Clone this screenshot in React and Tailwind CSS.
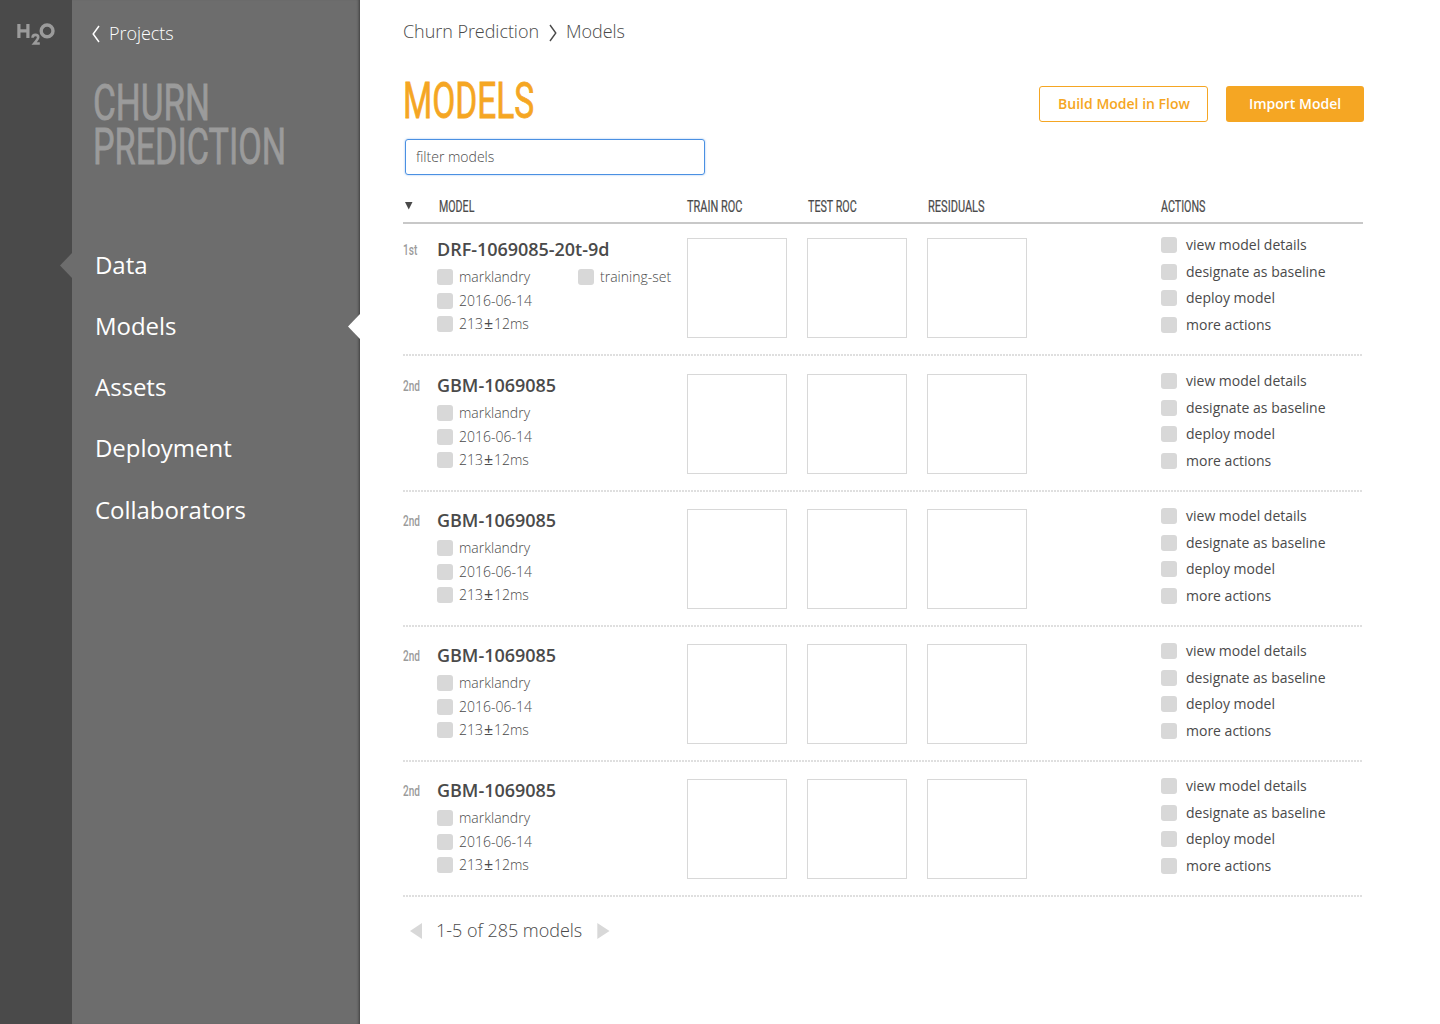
import React from "react";

const NAV = ["Data", "Models", "Assets", "Deployment", "Collaborators"];

const MODELS = [
  { rank: "1st", name: "DRF-1069085-20t-9d", set: "training-set", pad: "pt-[14px]" },
  { rank: "2nd", name: "GBM-1069085", pad: "pt-[18px]" },
  { rank: "2nd", name: "GBM-1069085", pad: "pt-[17px]" },
  { rank: "2nd", name: "GBM-1069085", pad: "pt-[17px]" },
  { rank: "2nd", name: "GBM-1069085", pad: "pt-[17px]" },
];

const ACTIONS = ["view model details", "designate as baseline", "deploy model", "more actions"];

function Narrow({ className = "", children }) {
  return (
    <span className={`block w-max origin-left whitespace-nowrap font-['Roboto',sans-serif] ${className}`}>
      {children}
    </span>
  );
}

function Square() {
  return <span className="size-4 shrink-0 rounded-[3px] bg-[#d8d8d8]" />;
}

function Meta({ children }) {
  return (
    <div className="flex h-4 items-center gap-1.5 text-sm leading-4 font-light whitespace-nowrap text-[#4a4a4a]">
      <Square />
      <span className="flex">{children}</span>
    </div>
  );
}

function Row({ model }) {
  return (
    <div>
      <div className={`flex pb-4 ${model.pad}`}>
        <div className="w-[34px] pt-1">
          <Narrow className="scale-x-[0.72] text-[14px] leading-4 font-medium text-[#9b9b9b]">{model.rank}</Narrow>
        </div>
        <div className="w-[250px]">
          <div className="h-[31px] text-lg leading-[23px] font-semibold tracking-[-0.03px] text-[#4a4a4a]">
            {model.name}
          </div>
          <div className="flex">
            <div className="flex w-[141px] flex-col">
              <Meta>marklandry</Meta>
              <div className="h-2" />
              <Meta>2016-06-14</Meta>
              <div className="h-[7px]" />
              <Meta>
                <span>213</span>
                <span className="-mt-px w-[11px] text-center text-[16px] leading-4 font-normal">±</span>
                <span>12ms</span>
              </Meta>
            </div>
            {model.set && <Meta>{model.set}</Meta>}
          </div>
        </div>
        <div className="flex w-[474px] gap-5">
          <div className="size-[100px] border border-[#d8d8d8]" />
          <div className="size-[100px] border border-[#d8d8d8]" />
          <div className="size-[100px] border border-[#d8d8d8]" />
        </div>
        <div className="-mt-px flex h-24 flex-col justify-between">
          {ACTIONS.map((a) => (
            <div key={a} className="flex h-4 items-center gap-[9px] text-sm leading-4 whitespace-nowrap text-[#4a4a4a]">
              <Square />
              <span>{a}</span>
            </div>
          ))}
        </div>
      </div>
      <div className="h-0.5 bg-[repeating-linear-gradient(90deg,#dfdfdf_0_2px,#ffffff_2px_3px)]" />
    </div>
  );
}

export default function App() {
  return (
    <div className="flex h-[1024px] w-[1440px] overflow-hidden bg-white font-['Open_Sans',sans-serif] text-[#4a4a4a]">
      <aside className="w-[72px] shrink-0 bg-[#4a4a4a] pt-[22px] pl-4">
        <svg width="40" height="24" viewBox="0 0 40 24" fill="none" stroke="#9b9b9b">
          <path d="M2.900 2v14M11.900 2v14M2.900 8.900h9" strokeWidth="3.200" />
          <circle cx="31.100" cy="8.900" r="5.900" strokeWidth="3.400" />
          <path d="M16.500 15.800c.1-2 1.400-2.900 2.900-2.900 1.700 0 2.800 1 2.800 2.400 0 1.500-1.200 2.700-4 6.200h5.600" strokeWidth="2.600" />
        </svg>
      </aside>

      <nav className="relative w-[288px] shrink-0 bg-[#6d6d6d] shadow-[inset_-3px_0_3px_-2px_rgba(0,0,0,0.45)]">
        <svg className="absolute top-[253px] -left-3" width="12" height="25" viewBox="0 0 12 25">
          <path d="M12 0v25L0 12.500z" fill="#6d6d6d" />
        </svg>
        <svg className="absolute top-[314px] right-0" width="12" height="25" viewBox="0 0 12 25">
          <path d="M12 0v25L0 12.500z" fill="#fff" />
        </svg>
        <div className="flex items-center gap-[9px] pt-[21px] pl-5 text-lg leading-6 font-light tracking-[-0.05px] text-white">
          <svg className="mt-px" width="8" height="18" viewBox="0 0 8 18" fill="none" stroke="#fff" strokeWidth="1.500">
            <path d="M7 1 1.200 9 7 17" />
          </svg>
          Projects
        </div>
        <div className="pt-9 pl-[21px] text-[50px] leading-[44px] text-[#9b9b9b] [-webkit-text-stroke:0.8px_#9b9b9b]">
          <Narrow className="scale-x-[0.7]">CHURN</Narrow>
          <Narrow className="scale-x-[0.684]">PREDICTION</Narrow>
        </div>
        <ul className="pt-[65px] pl-[23px] text-2xl leading-[61.150px] tracking-[-0.04px] text-white">
          {NAV.map((n) => (
            <li key={n}>{n}</li>
          ))}
        </ul>
      </nav>

      <main className="w-[1004px] pl-[43px]">
        <div className="flex items-center pt-[19px] text-lg leading-6 font-light tracking-[-0.05px]">
          <span>Churn Prediction</span>
          <svg className="mt-[3px] mr-[9px] ml-2.5" width="8" height="18" viewBox="0 0 8 18" fill="none" stroke="#4a4a4a" strokeWidth="1.400">
            <path d="M1 1 6.800 9 1 17" />
          </svg>
          <span>Models</span>
        </div>

        <div className="flex h-[96px] justify-between pt-[31px]">
          <h1 className="pt-[5px] text-[50px] leading-[44px] text-[#f5a623] [-webkit-text-stroke:0.8px_#f5a623]">
            <Narrow className="scale-x-[0.67]">MODELS</Narrow>
          </h1>
          <div className="mt-3 flex h-9 gap-[18px] text-sm font-semibold">
            <button className="w-[169px] rounded-[3px] border border-[#f5a623] pl-px text-[#f5a623]">
              Build Model in Flow
            </button>
            <button className="w-[138px] rounded-[3px] bg-[#f5a623] text-white">Import Model</button>
          </div>
        </div>

        <input
          className="ml-0.5 block h-9 w-[300px] rounded-[3px] border border-[#4a90e2] px-2.5 pb-0.5 text-sm font-light shadow-[0_0_2px_rgba(74,144,226,0.6)] outline-none placeholder:text-[#4a4a4a]"
          placeholder="filter models"
        />

        <div className="flex h-[49px] w-[960px] border-b-2 border-[#c8c8c8] pt-[23px] text-[16px] leading-[18px] [-webkit-text-stroke:0.2px_#4a4a4a]">
          <div className="w-9 pt-1 pl-0.5">
            <svg width="8" height="8" viewBox="0 0 8 8">
              <path d="M0 0h7.500L3.750 7.500z" fill="#4a4a4a" />
            </svg>
          </div>
          <div className="w-[248px]"><Narrow className="scale-x-[0.665]">MODEL</Narrow></div>
          <div className="w-[121px]"><Narrow className="scale-x-[0.685]">TRAIN ROC</Narrow></div>
          <div className="w-[120px]"><Narrow className="scale-x-[0.67]">TEST ROC</Narrow></div>
          <div className="w-[233px]"><Narrow className="scale-x-[0.69]">RESIDUALS</Narrow></div>
          <div><Narrow className="scale-x-[0.67]">ACTIONS</Narrow></div>
        </div>

        <div className="w-[960px]">
          {MODELS.map((m, i) => (
            <Row key={i} model={m} />
          ))}
        </div>

        <div className="flex items-center pt-[21px] pl-[7px] text-lg leading-6 font-light tracking-[-0.03px]">
          <svg className="mt-px" width="12" height="16" viewBox="0 0 12 16">
            <path d="M12 0v16L0 8z" fill="#d8d8d8" />
          </svg>
          <span className="w-[175px] pl-3.5">1-5 of 285 models</span>
          <svg className="mt-px" width="13" height="16" viewBox="0 0 13 16">
            <path d="M.3 0v16l12.200-8z" fill="#d8d8d8" />
          </svg>
        </div>
      </main>
    </div>
  );
}
